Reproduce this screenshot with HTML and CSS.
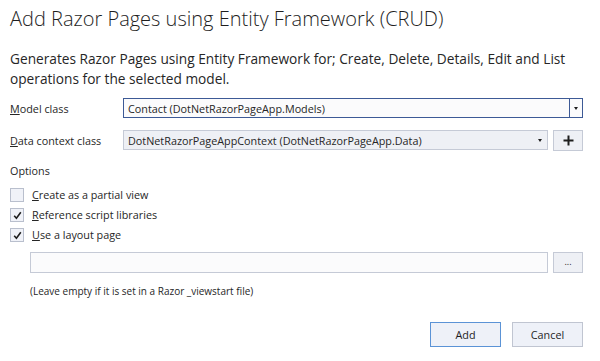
FILE: index.html
```html
<!DOCTYPE html>
<html lang="en">
<head>
    <meta charset="UTF-8">
    <title>Add Razor Pages using Entity Framework (CRUD)</title>
    <link rel="stylesheet" href="styles.css">
</head>
<body>
    <main class="dialog">
        <h1 class="title">Add Razor Pages using Entity Framework (CRUD)</h1>
        <p class="desc">Generates Razor Pages using Entity Framework for; Create, Delete, Details, Edit and List operations for the selected model.</p>

        <div class="field-row">
            <label class="field-label"><u>M</u>odel class</label>
            <div class="combo combo-focus">
                <span class="combo-text">Contact (DotNetRazorPageApp.Models)</span>
                <span class="combo-arrow"><i class="caret"></i></span>
            </div>
        </div>

        <div class="field-row">
            <label class="field-label"><u>D</u>ata context class</label>
            <div class="field-group">
                <div class="combo combo-idle">
                    <span class="combo-text">DotNetRazorPageAppContext (DotNetRazorPageApp.Data)</span>
                    <span class="combo-arrow no-line"><i class="caret"></i></span>
                </div>
                <button class="side-btn" type="button">
                    <svg width="11" height="11" viewBox="0 0 11 11"><path d="M5.5 0.5v10M0.5 5.5h10" stroke="#1e1e1e" stroke-width="2"/></svg>
                </button>
            </div>
        </div>

        <div class="options-label">Options</div>
        <div class="checks">
            <label class="check-row"><span class="box"></span><span><u>C</u>reate as a partial view</span></label>
            <label class="check-row"><span class="box"><svg width="9" height="9" viewBox="0 0 9 9"><path d="M1.2 4.8l2.2 2.4 4.4-6" fill="none" stroke="#1e1e1e" stroke-width="1.6"/></svg></span><span><u>R</u>eference script libraries</span></label>
            <label class="check-row"><span class="box"><svg width="9" height="9" viewBox="0 0 9 9"><path d="M1.2 4.8l2.2 2.4 4.4-6" fill="none" stroke="#1e1e1e" stroke-width="1.6"/></svg></span><span><u>U</u>se a layout page</span></label>
        </div>

        <div class="layout-row">
            <div class="field-group">
                <div class="text-input"></div>
                <button class="side-btn dots" type="button">...</button>
            </div>
            <p class="hint">(Leave empty if it is set in a Razor _viewstart file)</p>
        </div>

        <div class="actions">
            <button class="btn btn-default" type="button">Add</button>
            <button class="btn" type="button">Cancel</button>
        </div>
    </main>
</body>
</html>
```

FILE: styles.css
```css
body {
    margin: 0;
    padding: 0;
    background: #ffffff;
    color: #262626;
    font-family: "Open Sans", "Noto Sans", sans-serif;
}

.dialog {
    width: 573px;
    padding: 0 0 0 10px;
}

.title {
    margin: 0;
    padding-top: 4px;
    font-size: 20px;
    font-weight: 300;
    line-height: 30px;
    color: #1e1e1e;
}

.desc {
    margin: 15px 0 0;
    font-size: 13.7px;
    line-height: 20px;
}

.field-row {
    display: flex;
    align-items: center;
    margin-top: 9px;
}

.field-row + .field-row {
    margin-top: 12px;
}

.field-label {
    width: 113px;
    flex: none;
    font-size: 10.8px;
}

.field-group {
    flex: 1;
    display: flex;
    gap: 5px;
}

.combo {
    flex: 1;
    height: 20px;
    box-sizing: border-box;
    display: flex;
    align-items: center;
    font-size: 10.8px;
}

.combo-text {
    flex: 1;
    padding-left: 4px;
    white-space: nowrap;
}

.combo-focus {
    border: 1px solid #3d5a96;
    background: #fbfbfc;
}

.combo-idle {
    border: 1px solid #c5cad6;
    background: #eef0f5;
}

.combo-arrow {
    width: 12px;
    height: 100%;
    display: flex;
    align-items: center;
    justify-content: center;
    border-left: 1px solid #3d5a96;
}

.combo-arrow.no-line {
    border-left: none;
    width: 14px;
}

.caret {
    width: 0;
    height: 0;
    border-left: 2.5px solid transparent;
    border-right: 2.5px solid transparent;
    border-top: 3px solid #1e1e1e;
}

.side-btn {
    width: 30px;
    height: 21px;
    flex: none;
    padding: 0;
    border: 1px solid #c5cad6;
    background: #eef0f5;
    display: flex;
    align-items: center;
    justify-content: center;
    font-family: inherit;
    color: #1e1e1e;
}

.side-btn.dots {
    font-size: 9px;
    line-height: 1;
    padding-bottom: 2px;
}

.options-label {
    margin-top: 12px;
    font-size: 10.8px;
    line-height: 16px;
}

.checks {
    margin-top: 9px;
    display: flex;
    flex-direction: column;
    gap: 6px;
}

.check-row {
    display: flex;
    align-items: center;
    gap: 8px;
    font-size: 10.8px;
    line-height: 14px;
}

.box {
    width: 14px;
    height: 14px;
    box-sizing: border-box;
    border: 1px solid #b9bfcd;
    background: #f0f2f8;
    display: flex;
    align-items: center;
    justify-content: center;
}

.layout-row {
    padding-left: 20px;
    margin-top: 10px;
}

.text-input {
    flex: 1;
    height: 21px;
    box-sizing: border-box;
    border: 1px solid #c5cad6;
    background: #fbfbfc;
}

.hint {
    margin: 11px 0 0;
    font-size: 10px;
    line-height: 14px;
}

.actions {
    display: flex;
    justify-content: flex-end;
    gap: 11px;
    margin-top: 24px;
}

.btn {
    width: 71px;
    height: 25px;
    box-sizing: border-box;
    border: 1px solid #c0c5d1;
    background: #eef1f8;
    font-family: inherit;
    font-size: 10.8px;
    color: #1e1e1e;
    padding: 0;
}

.btn-default {
    border-color: #5b93d6;
}
```
